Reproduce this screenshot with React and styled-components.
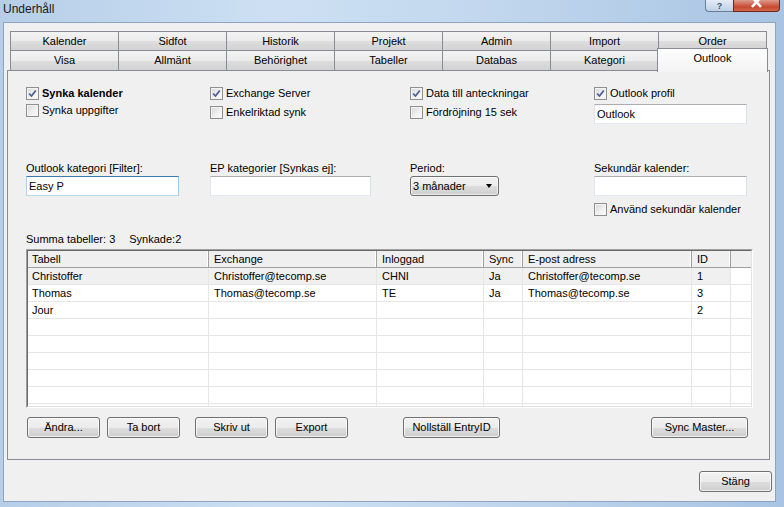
import React from "react";
import styled, { createGlobalStyle } from "styled-components";

const GlobalStyle = createGlobalStyle`
  html, body {
    margin: 0;
    padding: 0;
  }
  body {
    width: 784px;
    height: 507px;
    overflow: hidden;
    font-family: "Liberation Sans", Arial, sans-serif;
    font-size: 11px;
    color: #000;
  }
  * { box-sizing: border-box; }
`;

// fönster
const Window = styled.div`
  width: 784px;
  height: 507px;
  display: flex;
  flex-direction: column;
  padding: 0 8px 5px 3px;
  background: linear-gradient(90deg, #b6cee8 0%, #cde0f3 35%, #c3d8ee 60%, #a8c4e3 100%);
`;

const TitleBar = styled.div`
  height: 22px;
  display: flex;
  align-items: flex-start;
  margin-right: -4px;
`;

const Title = styled.div`
  font-size: 12px;
  line-height: 18px;
  color: #1b1b1b;
`;

const CaptionButtons = styled.div`
  margin-left: auto;
  display: flex;
`;

const HelpButton = styled.div`
  width: 28px;
  height: 12px;
  border: 1px solid #6b7d97;
  border-top: none;
  border-right: none;
  border-bottom-left-radius: 4px;
  background: linear-gradient(#e4ecf6, #bfd0e5);
  display: flex;
  justify-content: center;
  align-items: center;
  font-size: 9px;
  font-weight: bold;
  line-height: 10px;
  color: #44546d;
`;

const CloseButton = styled.div`
  width: 47px;
  height: 12px;
  border: 1px solid #6a291d;
  border-top: none;
  border-bottom-right-radius: 4px;
  background: linear-gradient(#dd9a8b, #c8472f 65%, #d4684f);
  overflow: hidden;
`;

const Client = styled.div`
  flex: 1;
  display: flex;
  flex-direction: column;
  background: #f0f0f0;
  border: 1px solid #8da3bf;
  padding: 8px 5px 0 3px;
`;

// flikar
const TabStrip = styled.div`
  padding-left: 3px;
`;

const TabRow = styled.div`
  display: flex;
  align-items: flex-start;
  height: ${(p) => (p.$second ? "21px" : "20px")};
  margin-top: ${(p) => (p.$second ? "-1px" : "0")};
`;

const Tab = styled.div`
  width: ${(p) => (p.$active ? "111px" : "109px")};
  height: ${(p) => (p.$active ? "24px" : "100%")};
  margin-right: -1px;
  margin-left: ${(p) => (p.$active ? "-1px" : "0")};
  margin-top: ${(p) => (p.$active ? "-2px" : "0")};
  border: 1px solid #898c95;
  border-bottom: ${(p) => (p.$active ? "none" : "1px solid #898c95")};
  background: ${(p) =>
    p.$active
      ? "linear-gradient(#fdfdfd, #f4f4f4)"
      : "linear-gradient(#f3f3f3 0%, #ebebeb 50%, #dedede 51%, #d2d2d2 100%)"};
  position: ${(p) => (p.$active ? "relative" : "static")};
  z-index: ${(p) => (p.$active ? 2 : "auto")};
  display: flex;
  justify-content: center;
  padding-top: 3px;
  line-height: 13px;
  color: #000;
`;

const Page = styled.div`
  height: 390px;
  margin-top: -1px;
  border: 1px solid #898c95;
  background: #f0f0f0;
  padding: 16px 0 0 18px;
  display: flex;
  flex-direction: column;
`;

const Columns = styled.div`
  display: grid;
  grid-template-columns: 184px 200px 184px 153px;
  align-items: start;
  margin-top: ${(p) => p.$mt || 0}px;
`;

const Stack = styled.div`
  display: flex;
  flex-direction: column;
  gap: ${(p) => p.$gap || 0}px;
`;

// kryssrutor
const CheckRow = styled.label`
  display: flex;
  align-items: center;
  height: 13px;
  gap: 3px;
  font-weight: ${(p) => (p.$bold ? "bold" : "normal")};
  line-height: 13px;
  white-space: nowrap;
  margin-top: ${(p) => p.$mt || 0}px;
`;

const CheckBox = styled.span`
  width: 13px;
  height: 13px;
  flex: none;
  border: 1px solid #8e8f8f;
  background: linear-gradient(135deg, #d6d6d6 0%, #f0f0f0 55%, #fcfcfc 100%);
  box-shadow: inset 0 0 0 1px #f4f4f4;
  display: flex;
  align-items: center;
  justify-content: center;
`;

function Check({ checked, bold, mt, children }) {
  return (
    <CheckRow $bold={bold} $mt={mt}>
      <CheckBox>
        {checked && (
          <svg width="9" height="9" viewBox="0 0 9 9">
            <path d="M1.2 4.6 L3.5 7 L7.8 1.4" fill="none" stroke="#4b5f93" strokeWidth="1.7" />
          </svg>
        )}
      </CheckBox>
      <span>{children}</span>
    </CheckRow>
  );
}

const Label = styled.div`
  line-height: 13px;
  margin-bottom: 1px;
  white-space: nowrap;
`;

const TextBox = styled.div`
  width: ${(p) => p.$w}px;
  height: 20px;
  background: #fff;
  border: 1px solid;
  border-color: ${(p) =>
    p.$focus ? "#3d7bad #a4c9e3 #b7d9ed #b5cfe7" : "#abadb3 #dbdfe6 #e3e9ef #e2e3ea"};
  padding: 0 2px;
  line-height: 18px;
  white-space: nowrap;
`;

const Combo = styled.div`
  width: 89px;
  height: 20px;
  border: 1px solid #707070;
  border-radius: 3px;
  background: linear-gradient(#f2f2f2 0%, #ebebeb 50%, #dddddd 51%, #cfcfcf 100%);
  box-shadow: inset 0 0 0 1px rgba(255, 255, 255, 0.6);
  display: flex;
  align-items: center;
  padding: 0 6px 0 2px;
  line-height: 18px;
`;

const Arrow = styled.span`
  margin-left: auto;
  width: 0;
  height: 0;
  border-left: 3px solid transparent;
  border-right: 3px solid transparent;
  border-top: 4px solid #000;
`;

const Summary = styled.div`
  display: flex;
  gap: 14px;
  line-height: 13px;
  margin-top: 17px;
`;

// tabell
const GridOuter = styled.div`
  width: 727px;
  height: 159px;
  margin-top: 3px;
  border: 1px solid;
  border-color: #a0a0a0 #ffffff #ffffff #a0a0a0;
`;

const GridInner = styled.div`
  height: 100%;
  border: 1px solid;
  border-color: #696969 #e3e3e3 #e3e3e3 #696969;
  background: #fff;
  overflow: hidden;
`;

const GridRow = styled.div`
  display: grid;
  grid-template-columns: 181px 168px 107px 39px 169px 39px 1fr;
  height: 17px;
  border-bottom: 1px solid ${(p) => (p.$header ? "#a0a0a0" : "#e6e6e6")};
  background: ${(p) => (p.$header ? "#efefef" : "#fff")};
`;

const Cell = styled.div`
  padding-left: ${(p) => (p.$first ? 4 : 5)}px;
  line-height: 16px;
  white-space: nowrap;
  overflow: hidden;
  border-right: ${(p) => (p.$last ? "none" : "1px solid #e6e6e6")};
  background: ${(p) => (p.$current ? "#f0f0f0" : "transparent")};
`;

const HeadCell = styled(Cell)`
  border-right: ${(p) => (p.$last ? "none" : "1px solid #a0a0a0")};
  box-shadow: ${(p) => (p.$last ? "none" : "inset -1px 0 #ffffff")};
`;

const ButtonRow = styled.div`
  display: flex;
  margin-top: 9px;
  padding-left: 1px;
`;

const Button = styled.div`
  width: ${(p) => p.$w}px;
  height: 21px;
  margin-left: ${(p) => p.$ml || 0}px;
  border: 1px solid #707070;
  border-radius: 3px;
  background: linear-gradient(#f2f2f2 0%, #ebebeb 50%, #dddddd 51%, #cfcfcf 100%);
  box-shadow: inset 0 0 0 1px rgba(255, 255, 255, 0.7);
  display: flex;
  align-items: center;
  justify-content: center;
  white-space: nowrap;
  line-height: 13px;
`;

const Footer = styled.div`
  flex: 1;
  display: flex;
  justify-content: flex-end;
  align-items: flex-start;
  padding-top: 11px;
  margin-right: -2px;
`;

const row1 = ["Kalender", "Sidfot", "Historik", "Projekt", "Admin", "Import", "Order"];
const row2 = ["Visa", "Allmänt", "Behörighet", "Tabeller", "Databas", "Kategori"];

const headers = ["Tabell", "Exchange", "Inloggad", "Sync", "E-post adress", "ID", ""];
const rows = [
  ["Christoffer", "Christoffer@tecomp.se", "CHNI", "Ja", "Christoffer@tecomp.se", "1"],
  ["Thomas", "Thomas@tecomp.se", "TE", "Ja", "Thomas@tecomp.se", "3"],
  ["Jour", "", "", "", "", "2"],
  ["", "", "", "", "", ""],
  ["", "", "", "", "", ""],
  ["", "", "", "", "", ""],
  ["", "", "", "", "", ""],
  ["", "", "", "", "", ""],
  ["", "", "", "", "", ""],
];

export default function App() {
  return (
    <>
      <GlobalStyle />
      <Window>
        <TitleBar>
          <Title>Underhåll</Title>
          <CaptionButtons>
            <HelpButton>?</HelpButton>
            <CloseButton>
              <svg width="46" height="12" viewBox="0 0 46 12">
                <path d="M18 -3 L27 7 M27 -3 L18 7" stroke="#fff" strokeWidth="2.6" fill="none" />
              </svg>
            </CloseButton>
          </CaptionButtons>
        </TitleBar>

        <Client>
          <TabStrip>
            <TabRow>
              {row1.map((t) => (
                <Tab key={t}>{t}</Tab>
              ))}
            </TabRow>
            <TabRow $second>
              {row2.map((t) => (
                <Tab key={t}>{t}</Tab>
              ))}
              <Tab $active>Outlook</Tab>
            </TabRow>
          </TabStrip>

          <Page>
            <Columns>
              <Stack $gap={4}>
                <Check checked bold>Synka kalender</Check>
                <Check>Synka uppgifter</Check>
              </Stack>
              <Stack $gap={6}>
                <Check checked>Exchange Server</Check>
                <Check>Enkelriktad synk</Check>
              </Stack>
              <Stack $gap={6}>
                <Check checked>Data till anteckningar</Check>
                <Check>Fördröjning 15 sek</Check>
              </Stack>
              <Stack $gap={4}>
                <Check checked>Outlook profil</Check>
                <TextBox $w={153}>Outlook</TextBox>
              </Stack>
            </Columns>

            <Columns $mt={38}>
              <Stack>
                <Label>Outlook kategori [Filter]:</Label>
                <TextBox $w={153} $focus>Easy P</TextBox>
              </Stack>
              <Stack>
                <Label>EP kategorier [Synkas ej]:</Label>
                <TextBox $w={161} />
              </Stack>
              <Stack>
                <Label>Period:</Label>
                <Combo>
                  3 månader
                  <Arrow />
                </Combo>
              </Stack>
              <Stack>
                <Label>Sekundär kalender:</Label>
                <TextBox $w={153} />
                <Check mt={7}>Använd sekundär kalender</Check>
              </Stack>
            </Columns>

            <Summary>
              <span>Summa tabeller: 3</span>
              <span>Synkade:2</span>
            </Summary>

            <GridOuter>
              <GridInner>
                <GridRow $header>
                  {headers.map((h, i) => (
                    <HeadCell key={i} $first={i === 0} $last={i === headers.length - 1}>
                      {h}
                    </HeadCell>
                  ))}
                </GridRow>
                {rows.map((r, ri) => (
                  <GridRow key={ri}>
                    {r.map((c, ci) => (
                      <Cell key={ci} $first={ci === 0} $current={ri === 0}>
                        {c}
                      </Cell>
                    ))}
                    <Cell $last />
                  </GridRow>
                ))}
              </GridInner>
            </GridOuter>

            <ButtonRow>
              <Button $w={73}>Ändra...</Button>
              <Button $w={73} $ml={7}>Ta bort</Button>
              <Button $w={73} $ml={15}>Skriv ut</Button>
              <Button $w={73} $ml={7}>Export</Button>
              <Button $w={97} $ml={55}>Nollställ EntryID</Button>
              <Button $w={97} $ml={151}>Sync Master...</Button>
            </ButtonRow>
          </Page>

          <Footer>
            <Button $w={73}>Stäng</Button>
          </Footer>
        </Client>
      </Window>
    </>
  );
}
